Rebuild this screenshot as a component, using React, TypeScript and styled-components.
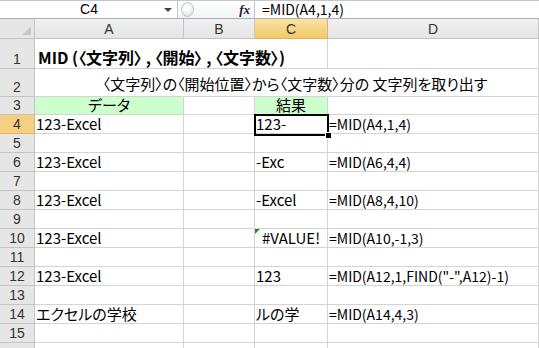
import React from 'react';
import styled, { createGlobalStyle } from 'styled-components';

const GlobalStyle = createGlobalStyle`
    html, body {
        margin: 0;
        padding: 0;
        background: #ffffff;
        overflow: hidden;
    }
    body {
        font-family: 'Noto Sans CJK JP', 'Noto Sans', sans-serif;
        font-size: 15px;
        font-feature-settings: 'palt';
        color: #000;
    }
`;

const Window = styled.div`
    width: 539px;
    height: 348px;
    display: flex;
    flex-direction: column;
    background: #d6dbe1;
    overflow: hidden;
`;

const FormulaBar = styled.div`
    height: 19px;
    display: flex;
    align-items: stretch;
    background: #ffffff;
    border-top: 1px solid #c2c7ce;
    border-bottom: 1px solid #a8afb8;
    box-sizing: border-box;
`;

const NameBox = styled.div`
    width: 178px;
    display: flex;
    align-items: center;
    border-right: 1px solid #c2c7ce;
    box-sizing: border-box;
`;

const NameText = styled.span`
    flex: 1;
    text-align: center;
    font-family: 'Liberation Sans', sans-serif;
    font-size: 14px;
    line-height: 17px;
    padding-left: 14px;
`;

const DropArrow = styled.span`
    width: 0;
    height: 0;
    margin-right: 5px;
    border-left: 4px solid transparent;
    border-right: 4px solid transparent;
    border-top: 4px solid #444;
`;

const Splitter = styled.div`
    width: 77px;
    display: flex;
    align-items: center;
    background: linear-gradient(#ffffff, #f2f4f7);
    border-right: 1px solid #c2c7ce;
    box-sizing: border-box;
`;

const Knob = styled.div`
    width: 11px;
    height: 13px;
    margin-left: 3px;
    border-radius: 50%;
    border: 1px solid #c5cad1;
    background: radial-gradient(circle at 45% 35%, #ffffff 20%, #dfe3e8 80%);
`;

const Fx = styled.span`
    margin-left: auto;
    margin-right: 4px;
    font-family: 'Liberation Serif', serif;
    font-style: italic;
    font-weight: bold;
    font-size: 13px;
    color: #222;
`;

const FormulaText = styled.div`
    flex: 1;
    padding-left: 7px;
    line-height: 17px;
    font-size: 14px;
    white-space: nowrap;
`;

const Gap = styled.div`
    height: 3px;
    background: #dfe3e8;
`;

const Sheet = styled.div`
    flex: 1;
    position: relative;
    display: grid;
    grid-template-columns: 35px 149px 71px 73px 211px;
    grid-template-rows: 20px 30px 28px 18px repeat(13, 19px);
    background: #ffffff;
`;

const Corner = styled.div`
    position: relative;
    background: #e6e6e6;
    border-right: 1px solid #c4c4c4;
    border-bottom: 1px solid #c4c4c4;
    box-sizing: border-box;

    &::after {
        content: '';
        position: absolute;
        right: 3px;
        bottom: 3px;
        border-left: 9px solid transparent;
        border-bottom: 9px solid #c8c8c8;
    }
`;

const ColHead = styled.div<{ $active?: boolean }>`
    display: flex;
    align-items: center;
    justify-content: center;
    font-family: 'Liberation Sans', sans-serif;
    font-size: 14px;
    color: #333;
    background: ${(p) => (p.$active ? 'linear-gradient(#f9e2a4, #f3c969)' : 'linear-gradient(#f1f1f1, #e5e5e5)')};
    border-right: 1px solid ${(p) => (p.$active ? '#dcb55e' : '#c4c4c4')};
    border-bottom: 1px solid ${(p) => (p.$active ? '#dcb55e' : '#c4c4c4')};
    box-sizing: border-box;
`;

const RowHead = styled.div<{ $active?: boolean }>`
    display: flex;
    align-items: flex-end;
    justify-content: center;
    font-family: 'Liberation Sans', sans-serif;
    font-size: 14px;
    line-height: 16px;
    color: #333;
    background: ${(p) => (p.$active ? '#f5d083' : '#e6e6e6')};
    border-right: 1px solid ${(p) => (p.$active ? '#dcb55e' : '#c4c4c4')};
    border-bottom: 1px solid ${(p) => (p.$active ? '#dcb55e' : '#c4c4c4')};
    box-sizing: border-box;
    padding-bottom: 1px;
`;

const Cell = styled.div<{
    $span?: number;
    $align?: string;
    $bold?: boolean;
    $fill?: string;
    $pad?: number;
    $size?: number;
    $lift?: number;
}>`
    position: relative;
    grid-column: span ${(p) => p.$span ?? 1};
    display: flex;
    align-items: flex-end;
    justify-content: ${(p) => p.$align ?? 'flex-start'};
    padding: 0 1px ${(p) => p.$lift ?? 1}px ${(p) => p.$pad ?? 1}px;
    background: ${(p) => p.$fill ?? '#ffffff'};
    border-right: 1px solid #d4d4d4;
    border-bottom: 1px solid #d4d4d4;
    box-sizing: border-box;
    font-size: ${(p) => p.$size ?? (p.$bold ? 16 : 15)}px;
    font-weight: ${(p) => (p.$bold ? 'bold' : 'normal')};
    line-height: 16px;
    white-space: nowrap;
`;

const ErrorMark = styled.span`
    position: absolute;
    left: 0;
    top: 0;
    border-right: 5px solid transparent;
    border-top: 5px solid #1e8c2a;
`;

const Selection = styled.div`
    position: absolute;
    left: 254px;
    top: 95px;
    width: 75px;
    height: 22px;
    border: 2px solid #000;
    box-sizing: border-box;
    pointer-events: none;
`;

const FillHandle = styled.div`
    position: absolute;
    right: -5px;
    bottom: -5px;
    width: 5px;
    height: 5px;
    background: #000;
    border: 1px solid #fff;
`;

type CellDef = {
    text?: string;
    span?: number;
    align?: string;
    bold?: boolean;
    fill?: string;
    pad?: number;
    size?: number;
    lift?: number;
    error?: boolean;
};

const GREEN = '#ccffcc';

// formulas in column D are drawn a bit smaller so the long FIND one fits
const f = (text: string): CellDef => ({ text, size: 14 });

const rows: CellDef[][] = [
    [{ text: 'MID (〈文字列〉 , 〈開始〉 , 〈文字数〉)', span: 3, bold: true, pad: 3, lift: 3 }, {}],
    [{ text: '〈文字列〉の〈開始位置〉から〈文字数〉分の 文字列を取り出す', span: 4, align: 'center', pad: 18, lift: 4 }],
    [{ text: 'データ', align: 'center', fill: GREEN }, {}, { text: '結果', align: 'center', fill: GREEN }, {}],
    [{ text: '123-Excel' }, {}, { text: '123-' }, f('=MID(A4,1,4)')],
    [{}, {}, {}, {}],
    [{ text: '123-Excel' }, {}, { text: '-Exc' }, f('=MID(A6,4,4)')],
    [{}, {}, {}, {}],
    [{ text: '123-Excel' }, {}, { text: '-Excel' }, f('=MID(A8,4,10)')],
    [{}, {}, {}, {}],
    [{ text: '123-Excel' }, {}, { text: '#VALUE!', align: 'center', error: true }, f('=MID(A10,-1,3)')],
    [{}, {}, {}, {}],
    [{ text: '123-Excel' }, {}, { text: '123' }, f('=MID(A12,1,FIND("-",A12)-1)')],
    [{}, {}, {}, {}],
    [{ text: 'エクセルの学校' }, {}, { text: 'ルの学' }, f('=MID(A14,4,3)')],
    [{}, {}, {}, {}],
    [{}, {}, {}, {}],
];

export default function App() {
    return (
        <>
            <GlobalStyle />
            <Window>
                <FormulaBar>
                    <NameBox>
                        <NameText>C4</NameText>
                        <DropArrow />
                    </NameBox>
                    <Splitter>
                        <Knob />
                        <Fx>fx</Fx>
                    </Splitter>
                    <FormulaText>=MID(A4,1,4)</FormulaText>
                </FormulaBar>
                <Gap />
                <Sheet>
                    <Corner />
                    {['A', 'B', 'C', 'D'].map((c) => (
                        <ColHead key={c} $active={c === 'C'}>
                            {c}
                        </ColHead>
                    ))}
                    {rows.map((cells, i) => (
                        <React.Fragment key={i}>
                            <RowHead $active={i === 3}>{i < 15 ? i + 1 : ''}</RowHead>
                            {cells.map((c, j) => (
                                <Cell
                                    key={j}
                                    $span={c.span}
                                    $align={c.align}
                                    $bold={c.bold}
                                    $fill={c.fill}
                                    $pad={c.pad}
                                    $size={c.size}
                                    $lift={c.lift}
                                >
                                    {c.error && <ErrorMark />}
                                    {c.text}
                                </Cell>
                            ))}
                        </React.Fragment>
                    ))}
                    <Selection>
                        <FillHandle />
                    </Selection>
                </Sheet>
            </Window>
        </>
    );
}
